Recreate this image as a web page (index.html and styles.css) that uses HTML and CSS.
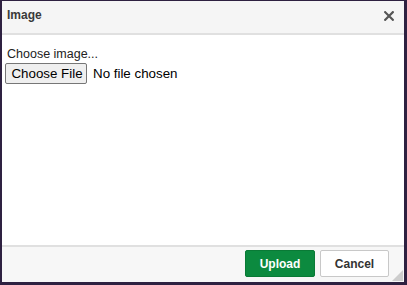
FILE: index.html
```html
<!DOCTYPE html>
<html>
<head>
<meta charset="utf-8">
<link rel="stylesheet" href="styles.css">
</head>
<body>
<div class="dialog">
  <div class="header">
    <span class="title">Image</span>
    <span class="close">
      <svg width="10" height="10" viewBox="0 0 10 10"><path d="M1.2 1.2 L8.8 8.8 M8.8 1.2 L1.2 8.8" stroke="#555" stroke-width="2.2" stroke-linecap="square"/></svg>
    </span>
  </div>
  <div class="body">
    <div class="label">Choose image...</div>
    <div class="filerow">
      <span class="filebtn">Choose File</span>
      <span class="nofile">No file chosen</span>
    </div>
  </div>
  <div class="footer">
    <span class="btn upload">Upload</span>
    <span class="btn cancel">Cancel</span>
    <span class="grip"></span>
  </div>
</div>
</body>
</html>
```
FILE: styles.css
```css
html, body { margin: 0; padding: 0; background: #fff; }
body { font-family: Arial, "Liberation Sans", sans-serif; }
.dialog {
  width: 407px; height: 285px; box-sizing: border-box;
  border-style: solid; border-color: #2e2141;
  border-width: 1px 3px 3px 2px;
  display: flex; flex-direction: column; background: #fff;
}
.header {
  height: 34px; flex: none; box-sizing: border-box;
  background: #f5f5f5; border-bottom: 2px solid #e0e0e0;
  display: flex; align-items: flex-start; justify-content: space-between;
  padding: 7px 10px 0 5px;
}
.title { font-weight: bold; font-size: 12px; line-height: 14px; color: #3a3a3a; }
.close { display: flex; padding-top: 3px; }
.body { flex: 1; padding: 12px 3px 0 3px; }
.label { font-size: 12.5px; color: #222; line-height: 15px; margin-left: 2px; }
.filerow { display: flex; align-items: center; margin-top: 1px; }
.filebtn {
  font-size: 13.333px; color: #000; background: #efefef;
  border: 1px solid #767676; border-radius: 2px; box-sizing: border-box;
  height: 21px; width: 82px; padding-left: 2px;
  display: flex; align-items: center; justify-content: center;
}
.nofile { font-size: 13.333px; color: #000; margin-left: 6px; }
.footer {
  height: 37px; flex: none; box-sizing: border-box;
  border-top: 2px solid #e0e0e0; background: #f7f7f7;
  display: flex; align-items: flex-start; justify-content: flex-end;
  padding: 3px 15px 0 0; gap: 5px; position: relative;
}
.btn {
  font-size: 12px; font-weight: bold; height: 27px; box-sizing: border-box;
  display: flex; align-items: center; justify-content: center; border-radius: 2px;
}
.upload { background: #0c8a3f; color: #fff; width: 70px; border: 1px solid #0a7a36; }
.cancel { background: #fff; color: #333; width: 69px; border: 1px solid #c8c8c8; }
.grip {
  position: absolute; right: 1px; bottom: 1px; width: 0; height: 0;
  border-left: 11px solid transparent; border-bottom: 11px solid #cdcdcd;
}
```
